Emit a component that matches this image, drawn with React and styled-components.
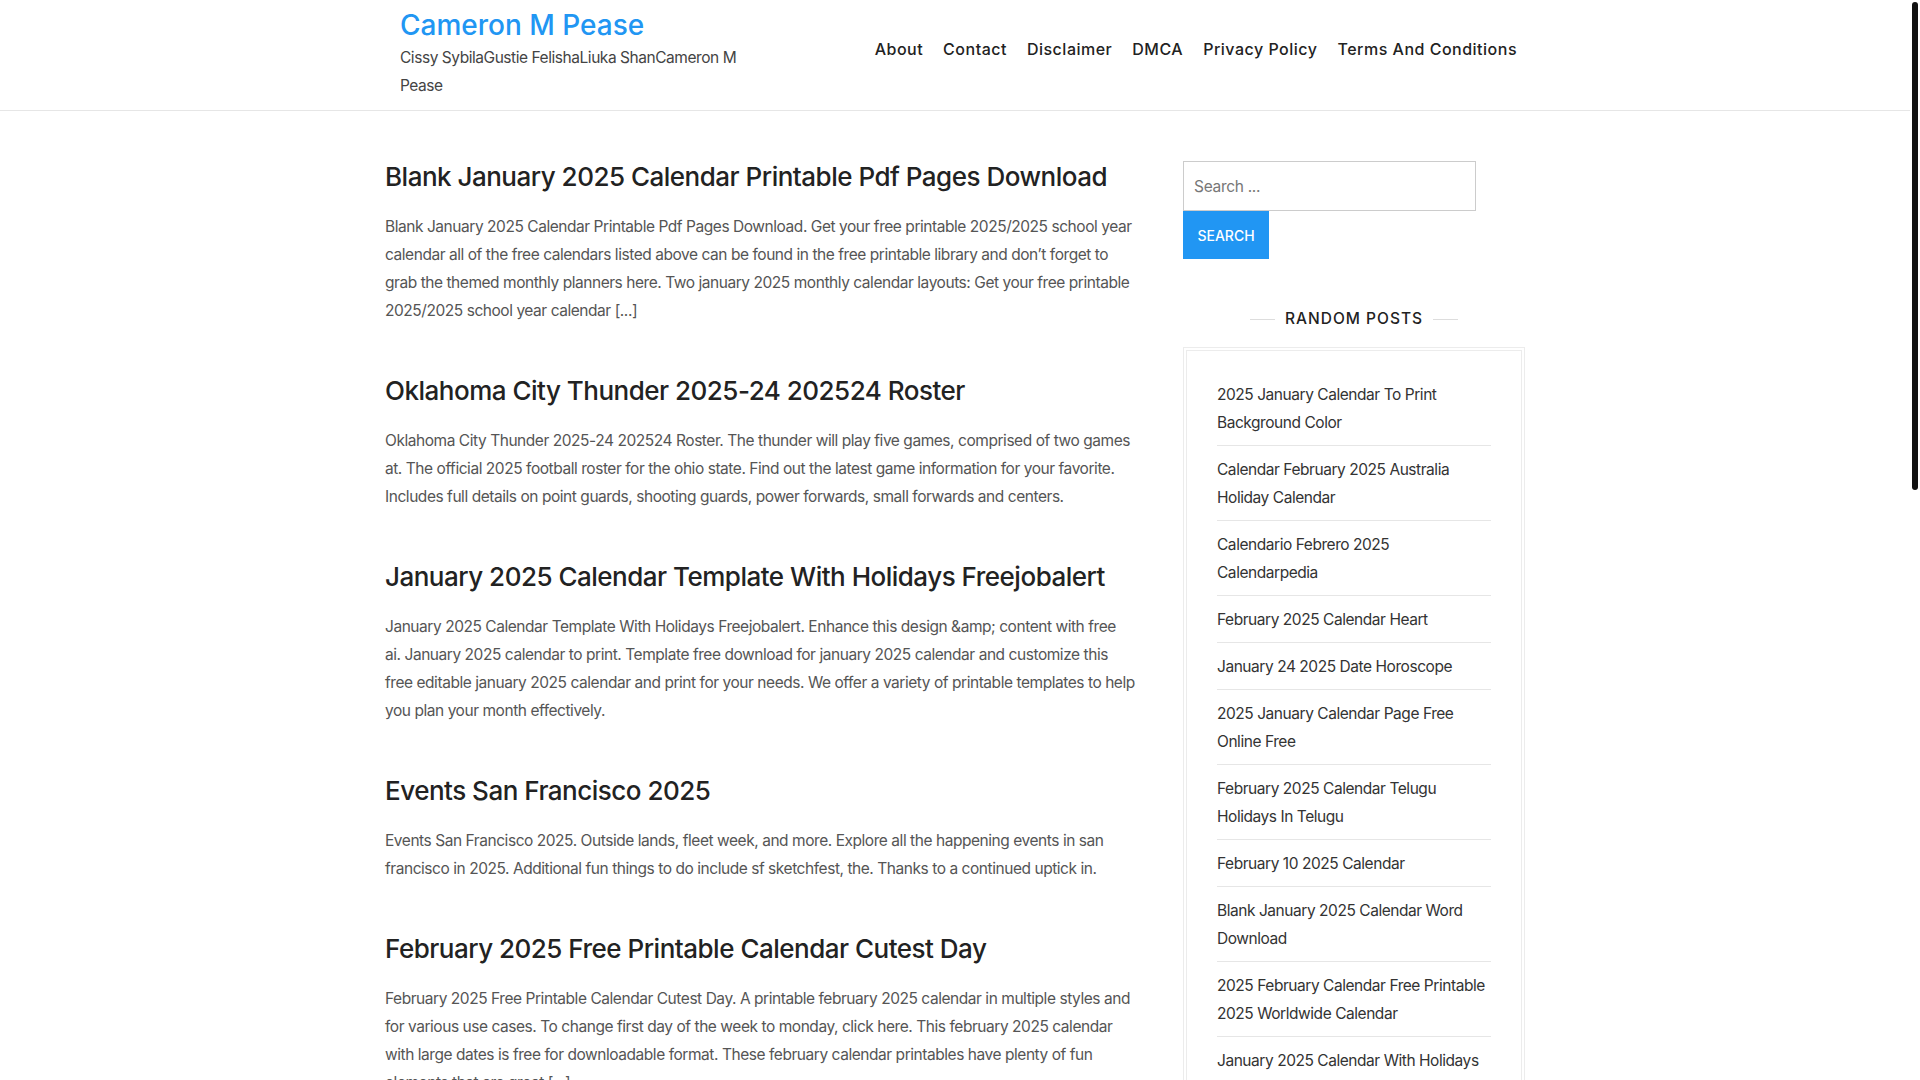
import React from 'react';
import styled, { createGlobalStyle } from 'styled-components';

const GlobalStyle = createGlobalStyle`
  html {
    scrollbar-width: none;
  }
  html::-webkit-scrollbar {
    display: none;
  }
  html, body {
    margin: 0;
    padding: 0;
    background: #fff;
  }
  body {
    font-family: "Inter", "Open Sans", sans-serif;
    color: #555;
  }
`;

const posts = [
  {
    title: 'Blank January 2025 Calendar Printable Pdf Pages Download',
    text: 'Blank January 2025 Calendar Printable Pdf Pages Download. Get your free printable 2025/2025 school year calendar all of the free calendars listed above can be found in the free printable library and don’t forget to grab the themed monthly planners here. Two january 2025 monthly calendar layouts: Get your free printable 2025/2025 school year calendar [...]',
  },
  {
    title: 'Oklahoma City Thunder 2025-24 202524 Roster',
    text: 'Oklahoma City Thunder 2025-24 202524 Roster. The thunder will play five games, comprised of two games at. The official 2025 football roster for the ohio state. Find out the latest game information for your favorite. Includes full details on point guards, shooting guards, power forwards, small forwards and centers.',
  },
  {
    title: 'January 2025 Calendar Template With Holidays Freejobalert',
    text: 'January 2025 Calendar Template With Holidays Freejobalert. Enhance this design &amp; content with free ai. January 2025 calendar to print. Template free download for january 2025 calendar and customize this free editable january 2025 calendar and print for your needs. We offer a variety of printable templates to help you plan your month effectively.',
  },
  {
    title: 'Events San Francisco 2025',
    text: 'Events San Francisco 2025. Outside lands, fleet week, and more. Explore all the happening events in san francisco in 2025. Additional fun things to do include sf sketchfest, the. Thanks to a continued uptick in.',
  },
  {
    title: 'February 2025 Free Printable Calendar Cutest Day',
    text: 'February 2025 Free Printable Calendar Cutest Day. A printable february 2025 calendar in multiple styles and for various use cases. To change first day of the week to monday, click here. This february 2025 calendar with large dates is free for downloadable format. These february calendar printables have plenty of fun elements that are great [...]',
  },
  {
    title: 'Printable January 2025 Calendar With Week Numbers',
    text: 'Printable January 2025 Calendar With Week Numbers. Download a free printable calendar with week numbers for january 2025. All calendars are blank and ready to print for school, work and home planning. Choose from several layouts and paper sizes [...]',
  },
  {
    title: 'February 2025 Calendar With Holidays Usa',
    text: 'February 2025 Calendar With Holidays Usa. The calendar lists all federal holidays and observances for the month. Print it out or keep it on your desk to stay organized through the whole month of february [...]',
  },
  {
    title: 'January 2025 Moon Phases Calendar',
    text: 'January 2025 Moon Phases Calendar. See the dates of the full moon, new moon and quarter phases for january 2025. A simple calendar for gardeners, photographers and sky watchers [...]',
  },
  {
    title: 'Free Editable February 2025 Calendar Word',
    text: 'Free Editable February 2025 Calendar Word. Download the editable word template and customize it with your own notes and events. The template is free for personal use and easy to print at home [...]',
  },
];

const randomPosts = [
  '2025 January Calendar To Print Background Color',
  'Calendar February 2025 Australia Holiday Calendar',
  'Calendario Febrero 2025 Calendarpedia',
  'February 2025 Calendar Heart',
  'January 24 2025 Date Horoscope',
  '2025 January Calendar Page Free Online Free',
  'February 2025 Calendar Telugu Holidays In Telugu',
  'February 10 2025 Calendar',
  'Blank January 2025 Calendar Word Download',
  '2025 February Calendar Free Printable 2025 Worldwide Calendar',
  'January 2025 Calendar With Holidays Free Template In Word',
  'Printable January 2025 Calendar With Week Numbers',
];

const navItems = ['About', 'Contact', 'Disclaimer', 'DMCA', 'Privacy Policy', 'Terms And Conditions'];

export default function App() {
  return (
    <Page>
      <GlobalStyle />
      <ScrollThumb />
      <Header>
        <HeaderInner>
          <Branding>
            <SiteTitle href="#">Cameron M Pease</SiteTitle>
            <Tagline>Cissy SybilaGustie FelishaLiuka ShanCameron M Pease</Tagline>
          </Branding>
          <Nav>
            {navItems.map((item) => (
              <NavLink key={item} href="#">{item}</NavLink>
            ))}
          </Nav>
        </HeaderInner>
      </Header>

      <Main>
        <Content>
          {posts.map((post) => (
            <Article key={post.title}>
              <PostTitle>{post.title}</PostTitle>
              <Excerpt>{post.text}</Excerpt>
            </Article>
          ))}
        </Content>

        <Sidebar>
          <SearchForm onSubmit={(e) => e.preventDefault()}>
            <SearchInput type="search" placeholder="Search ..." />
            <SearchButton type="submit">Search</SearchButton>
          </SearchForm>

          <WidgetTitle>Random Posts</WidgetTitle>
          <WidgetBox>
            <PostList>
              {randomPosts.map((p) => (
                <PostItem key={p}>
                  <a href="#">{p}</a>
                </PostItem>
              ))}
            </PostList>
          </WidgetBox>
        </Sidebar>
      </Main>

      <Footer>
        <FooterInner>Copyright © 2025 Cameron M Pease</FooterInner>
      </Footer>
    </Page>
  );
}

const Page = styled.div`
  width: 1910px;
`;

// thin dark scrollbar thumb drawn over the right edge
const ScrollThumb = styled.div`
  position: fixed;
  top: 2px;
  right: 2px;
  width: 6px;
  height: 488px;
  border-radius: 3px;
  background: #111;
  z-index: 10;
`;

const Header = styled.header`
  border-bottom: 1px solid #e6e6e6;
`;

const HeaderInner = styled.div`
  width: 1140px;
  margin: 0 auto;
  display: flex;
  align-items: flex-start;
  justify-content: space-between;
  padding: 8px 0 10px 15px;
  box-sizing: border-box;
`;

const Branding = styled.div`
  width: 345px;
`;

const SiteTitle = styled.a`
  display: block;
  font-size: 28px;
  line-height: 34px;
  font-weight: 500;
  color: #2196f3;
  text-decoration: none;
`;

const Tagline = styled.p`
  margin: 2px 0 0;
  font-size: 15.5px;
  line-height: 28px;
  letter-spacing: -0.45px;
  color: #444;
`;

const Nav = styled.nav`
  display: flex;
  margin-top: 27px;
`;

const NavLink = styled.a`
  padding: 0 10px;
  font-size: 16px;
  line-height: 28px;
  font-weight: 500;
  letter-spacing: 0.5px;
  color: #222;
  text-decoration: none;
  &:last-child {
    padding-right: 8px;
  }
`;

const Main = styled.div`
  width: 1140px;
  margin: 0 auto;
  padding-top: 50px;
  display: flex;
  gap: 48px;
  align-items: flex-start;
`;

const Content = styled.main`
  width: 750px;
  flex: none;
`;

const Article = styled.article`
  margin-bottom: 50px;
`;

const PostTitle = styled.h2`
  margin: 0 0 20px;
  font-size: 26px;
  line-height: 32px;
  font-weight: 500;
  letter-spacing: -0.5px;
  color: #222;
`;

const Excerpt = styled.p`
  margin: 0;
  font-size: 15.5px;
  line-height: 28px;
  letter-spacing: -0.45px;
  color: #555;
`;

const Sidebar = styled.aside`
  width: 342px;
  flex: none;
`;

const SearchForm = styled.form`
  display: flex;
  flex-direction: column;
  align-items: flex-start;
`;

const SearchInput = styled.input`
  width: 293px;
  height: 50px;
  box-sizing: border-box;
  border: 1px solid #ccc;
  padding: 0 10px;
  font-family: inherit;
  font-size: 15.5px;
  letter-spacing: -0.3px;
  color: #444;
  outline: none;
  &::placeholder {
    color: #777;
  }
`;

const SearchButton = styled.button`
  width: 86px;
  height: 48px;
  border: none;
  background: #2196f3;
  color: #fff;
  font-family: inherit;
  font-size: 14px;
  font-weight: 500;
  text-transform: uppercase;
  cursor: pointer;
`;

const WidgetTitle = styled.h3`
  margin: 48px 0 16px;
  display: flex;
  align-items: center;
  justify-content: center;
  gap: 10px;
  font-size: 15.5px;
  line-height: 24px;
  font-weight: 500;
  letter-spacing: 1px;
  text-transform: uppercase;
  color: #222;
  &::before,
  &::after {
    content: '';
    width: 25px;
    height: 1px;
    background: #ddd;
  }
`;

const WidgetBox = styled.div`
  border: 1px solid #ececec;
  padding: 2px;
`;

const PostList = styled.ul`
  list-style: none;
  margin: 0;
  border: 1px solid #ececec;
  padding: 20px 30px;
`;

const PostItem = styled.li`
  padding: 10px 0 8px;
  border-bottom: 1px solid #e6e6e6;
  font-size: 15.5px;
  line-height: 28px;
  letter-spacing: -0.45px;
  a {
    color: #333;
    text-decoration: none;
  }
  &:last-child {
    border-bottom: none;
  }
`;

const Footer = styled.footer`
  margin-top: 30px;
  border-top: 1px solid #e6e6e6;
`;

const FooterInner = styled.div`
  width: 1140px;
  margin: 0 auto;
  padding: 30px 0;
  font-size: 15px;
  color: #666;
  text-align: center;
`;
